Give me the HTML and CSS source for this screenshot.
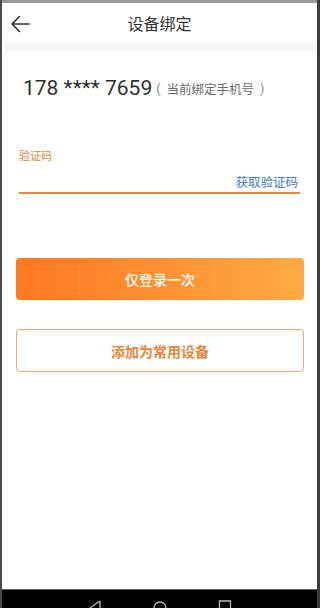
FILE: index.html
```html
<!DOCTYPE html>
<html lang="zh">
<head>
<meta charset="utf-8">
<title>设备绑定</title>
<link rel="stylesheet" href="styles.css">
</head>
<body>
<div class="screen">
  <div class="statusbar"></div>
  <div class="app">
    <header class="header">
      <svg class="back" width="20" height="18" viewBox="0 0 20 18" aria-hidden="true">
        <path d="M19 9H2M9.5 1.5L2 9l7.5 7.5" fill="none" stroke="#333" stroke-width="1.6" stroke-linecap="round" stroke-linejoin="round"/>
      </svg>
      <h1 class="title">设备绑定</h1>
    </header>
    <div class="divider"></div>
    <main class="content">
      <div class="phone-row">
        <span class="phone">178 **** 7659</span>
        <span class="phone-note"><span class="paren">(</span>当前绑定手机号<span class="paren">)</span></span>
      </div>
      <div class="field">
        <div class="field-label">验证码</div>
        <div class="field-input">
          <span class="get-code">获取验证码</span>
        </div>
      </div>
      <button class="btn btn-primary">仅登录一次</button>
      <button class="btn btn-outline">添加为常用设备</button>
    </main>
  </div>
  <nav class="navbar">
    <svg class="nav-icon" width="14" height="8" viewBox="0 0 14 8" aria-hidden="true"><path d="M12 1L2 8M12 1V8" fill="none" stroke="#bbb" stroke-width="1.3"/></svg>
    <svg class="nav-icon" width="14" height="8" viewBox="0 0 14 8" aria-hidden="true"><path d="M1 8A6 6 0 0 1 13 8" fill="none" stroke="#bbb" stroke-width="1.3"/></svg>
    <svg class="nav-icon" width="14" height="8" viewBox="0 0 14 8" aria-hidden="true"><path d="M1.5 8V1H12.5V8" fill="none" stroke="#bbb" stroke-width="1.3"/></svg>
  </nav>
</div>
</body>
</html>
```

FILE: styles.css
```css
* { box-sizing: border-box; }
html, body {
  margin: 0;
  padding: 0;
  width: 320px;
  height: 608px;
  overflow: hidden;
  background: #000;
  font-family: Roboto, "Noto Sans CJK SC", sans-serif;
}
.screen {
  width: 320px;
  height: 608px;
  display: flex;
  flex-direction: column;
  background: #fff;
  border-left: 2px solid #4a4a4a;
  border-right: 3px solid #3a3a3a;
}
.statusbar {
  height: 3px;
  background: #9b9b9b;
  flex: none;
}
.app {
  flex: 1;
  display: flex;
  flex-direction: column;
  background: #fff;
}
.header {
  height: 40px;
  display: flex;
  align-items: center;
  justify-content: center;
  position: relative;
  flex: none;
}
.back {
  position: absolute;
  left: 8px;
  top: 12px;
}
.title {
  margin: 0;
  font-size: 16px;
  font-weight: 400;
  color: #333;
  font-family: "Noto Sans CJK SC", sans-serif;
}
.divider {
  height: 8px;
  margin: 0 2px 0 3px;
  background: #f5f5f5;
  flex: none;
}
.content {
  flex: 1;
  display: flex;
  flex-direction: column;
  padding: 0 14px 0 14px;
}
.phone-row {
  margin-top: 22px;
  height: 30px;
  display: flex;
  align-items: center;
  padding-left: 7px;
}
.phone {
  font-size: 21px;
  color: #2e2e2e;
}
.phone-note {
  margin-left: 4px;
  font-size: 12.5px;
  color: #6a6a6a;
  font-family: "Noto Sans CJK SC", sans-serif;
  display: flex;
  align-items: center;
}
.paren {
  font-family: Roboto, sans-serif;
  color: #888;
}
.paren:first-child { margin-right: 6px; }
.paren:last-child { margin-left: 6px; }
.field {
  margin-top: 45px;
  padding: 0 3px;
}
.field-label {
  height: 14px;
  line-height: 14px;
  font-size: 11px;
  font-weight: 500;
  color: #e09c5c;
  font-family: "Noto Sans CJK SC", sans-serif;
}
.field-input {
  margin-top: 8px;
  height: 24px;
  display: flex;
  align-items: center;
  justify-content: flex-end;
  border-bottom: 2px solid #e9892e;
}
.get-code {
  font-size: 12.5px;
  color: #3e7cc2;
  font-family: "Noto Sans CJK SC", sans-serif;
  padding-right: 2px;
}
.btn {
  display: flex;
  align-items: center;
  justify-content: center;
  width: 288px;
  border-radius: 4px;
  font-family: "Noto Sans CJK SC", sans-serif;
  font-size: 14px;
  padding: 0;
}
.btn-primary {
  margin-top: 64px;
  height: 42px;
  border: none;
  color: #fff;
  background: linear-gradient(90deg, #ff7820 0%, #ffaa44 100%);
  font-weight: 500;
}
.btn-outline {
  margin-top: 29px;
  height: 43px;
  background: #fff;
  border: 1px solid #e9aa74;
  color: #e5873a;
  font-weight: 700;
}
.navbar {
  height: 19px;
  flex: none;
  background: #000;
  border-top: 1px solid #5a5a5a;
  display: flex;
  align-items: flex-end;
  justify-content: center;
  gap: 51px;
}
.nav-icon {
  display: block;
}
```
